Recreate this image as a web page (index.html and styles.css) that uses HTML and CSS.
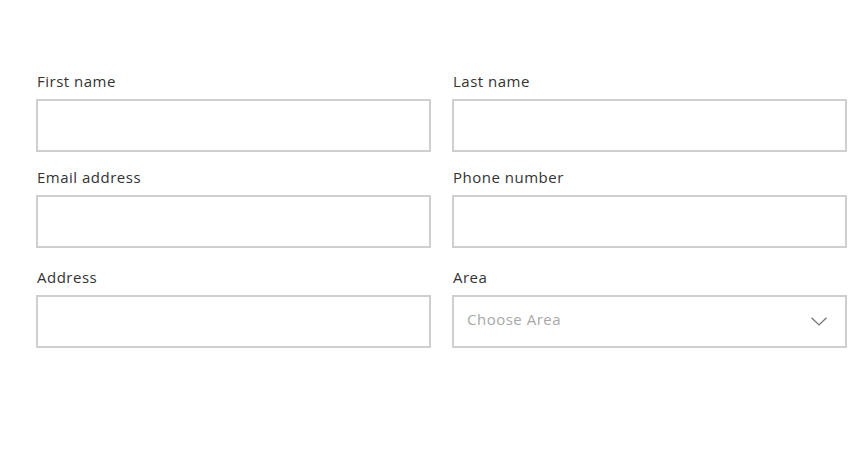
FILE: index.html
```html
<!DOCTYPE html>
<html lang="en">
<head>
<meta charset="utf-8">
<title>Form</title>
<link rel="stylesheet" href="styles.css">
</head>
<body>
<form class="form">
  <div class="field">
    <label class="label" for="fn">First name</label>
    <input class="input" id="fn" type="text">
  </div>
  <div class="field">
    <label class="label" for="ln">Last name</label>
    <input class="input" id="ln" type="text">
  </div>
  <div class="field">
    <label class="label" for="em">Email address</label>
    <input class="input" id="em" type="email">
  </div>
  <div class="field">
    <label class="label" for="ph">Phone number</label>
    <input class="input" id="ph" type="tel">
  </div>
  <div class="field field-last">
    <label class="label" for="ad">Address</label>
    <input class="input" id="ad" type="text">
  </div>
  <div class="field field-last">
    <label class="label" for="ar">Area</label>
    <div class="select">
      <span class="placeholder">Choose Area</span>
      <svg class="chevron" width="16" height="9" viewBox="0 0 16 9" aria-hidden="true">
        <path d="M0.5 0.7 L8 8 L15.5 0.7" fill="none" stroke="#707070" stroke-width="1.2"/>
      </svg>
    </div>
  </div>
</form>
</body>
</html>
```

FILE: styles.css
```css
* { box-sizing: border-box; }
html, body { margin: 0; background: #fff; }
body {
  font-family: "Open Sans", "Liberation Sans", sans-serif;
  color: #333;
}
.form {
  display: grid;
  grid-template-columns: 1fr 1fr;
  column-gap: 21px;
  padding: 71px 10px 0 36px;
}
.field {
  display: flex;
  flex-direction: column;
  margin-bottom: 15px;
}
.field-last { margin-top: 4px; }
.label {
  font-size: 15px;
  letter-spacing: 0.5px;
  line-height: 20px;
  margin-bottom: 8px;
  padding-left: 1px;
  color: #333;
}
.input, .select {
  height: 53px;
  border: 2px solid #cfcfcf;
  background: #fff;
  width: 100%;
  margin: 0;
  font: inherit;
}
.select {
  display: flex;
  align-items: center;
  justify-content: space-between;
  padding: 0 18px 0 13px;
}
.placeholder {
  font-size: 15px;
  letter-spacing: 0.5px;
  color: #a8a8a8;
  margin-top: -6px;
}
.chevron { margin-top: 0; }
```
